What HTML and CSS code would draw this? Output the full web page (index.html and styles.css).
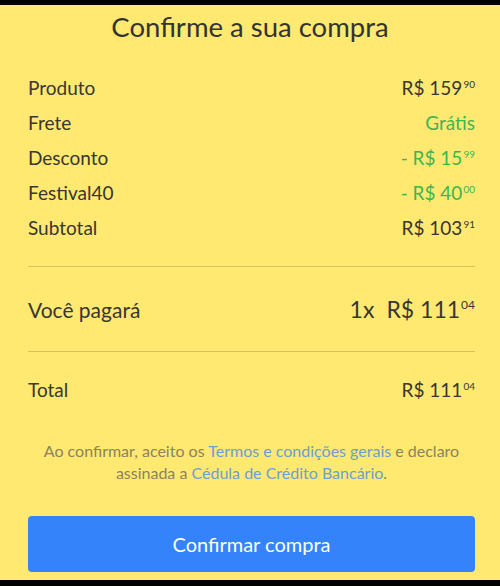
FILE: index.html
```html
<!DOCTYPE html>
<html lang="pt">
  <head>
    <meta charset="UTF-8" />
    <meta name="viewport" content="width=device-width, initial-scale=1.0" />
    <title>Confirme a sua compra</title>
    <link rel="stylesheet" href="styles.css">
  </head>
  <body>
    <div class="screen">
      <header class="title">Confirme a sua compra</header>

      <div class="summary">
        <div class="row">
          <span class="label">Produto</span>
          <span class="price">R$ 159<sup class="cents">90</sup></span>
        </div>
        <div class="row">
          <span class="label">Frete</span>
          <span class="price green">Grátis</span>
        </div>
        <div class="row">
          <span class="label">Desconto</span>
          <span class="price green">- R$ 15<sup class="cents">99</sup></span>
        </div>
        <div class="row">
          <span class="label">Festival40</span>
          <span class="price green">- R$ 40<sup class="cents">00</sup></span>
        </div>
        <div class="row">
          <span class="label">Subtotal</span>
          <span class="price">R$ 103<sup class="cents">91</sup></span>
        </div>
      </div>

      <div class="divider"></div>

      <div class="row pay">
        <span class="label">Você pagará</span>
        <span class="price"><span class="times">1x</span>R$ 111<sup class="cents">04</sup></span>
      </div>

      <div class="divider"></div>

      <div class="row total">
        <span class="label">Total</span>
        <span class="price">R$ 111<sup class="cents">04</sup></span>
      </div>

      <div class="terms">
        <p>Ao confirmar, aceito os <a href="#">Termos e condições gerais</a> e declaro</p>
        <p>assinada a <a href="#">Cédula de Crédito Bancário</a>.</p>
      </div>

      <button type="button" class="confirmBtn">Confirmar compra</button>
    </div>
  </body>
</html>
```

FILE: styles.css
```css
* {
  margin: 0;
  padding: 0;
  box-sizing: border-box;
}
body {
  width: 500px;
  height: 586px;
  background: #000;
  font-family: "Lato", "Liberation Sans", sans-serif;
  color: #333;
  overflow: hidden;
}
.screen {
  margin-top: 5px;
  height: 575px;
  background: #ffe971;
  padding: 0 25px 0 28px;
  display: flex;
  flex-direction: column;
}
.title {
  height: 44px;
  line-height: 44px;
  text-align: center;
  font-size: 27.5px;
  color: #333;
  margin: 0 -25px 0 -28px;
}
.summary {
  margin-top: 21px;
}
.row {
  display: flex;
  justify-content: space-between;
  align-items: center;
  height: 35px;
  font-size: 19px;
  color: #383632;
}
.price .cents {
  font-size: 10px;
  vertical-align: 7px;
  line-height: 0;
  margin-left: 1px;
}
.green {
  color: #3fb54f;
}
.divider {
  height: 1px;
  background: #d6c35e;
  margin-top: 21px;
}
.row.pay {
  height: 84px;
  font-size: 21px;
}
.row.pay + .divider {
  margin-top: 0;
}
.row.pay .price {
  font-size: 23px;
}
.row.pay .cents {
  font-size: 12px;
  vertical-align: 9px;
}
.times {
  margin-right: 12px;
}
.row.total {
  height: 74px;
}
.terms {
  margin-top: 14px;
  text-align: center;
  font-size: 16px;
  line-height: 22px;
  color: #8b8260;
}
.terms a {
  color: #6d9ed3;
  text-decoration: none;
}
.confirmBtn {
  margin-top: 32px;
  height: 56px;
  width: 100%;
  border: none;
  border-radius: 4px;
  background: #3483fa;
  color: #fff;
  font-family: inherit;
  font-size: 20px;
  cursor: pointer;
}
```
